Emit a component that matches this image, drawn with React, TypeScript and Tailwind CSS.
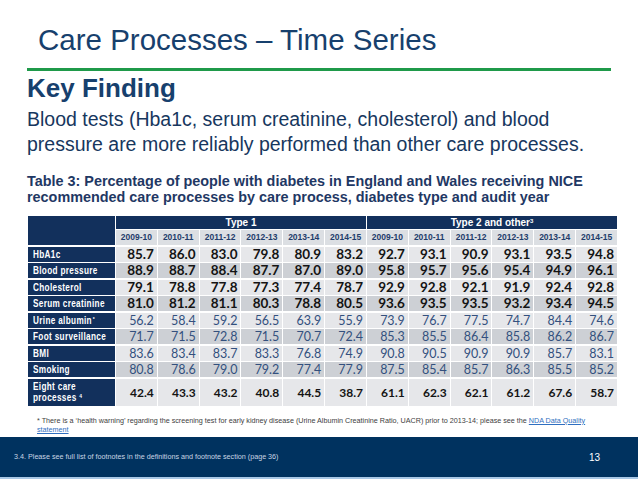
const rows = [
  { label: "HbA1c", kind: "bold", t1: ["85.7", "86.0", "83.0", "79.8", "80.9", "83.2"], t2: ["92.7", "93.1", "90.9", "93.1", "93.5", "94.8"] },
  { label: "Blood pressure", kind: "bold", t1: ["88.9", "88.7", "88.4", "87.7", "87.0", "89.0"], t2: ["95.8", "95.7", "95.6", "95.4", "94.9", "96.1"] },
  { label: "Cholesterol", kind: "bold", t1: ["79.1", "78.8", "77.8", "77.3", "77.4", "78.7"], t2: ["92.9", "92.8", "92.1", "91.9", "92.4", "92.8"] },
  { label: "Serum creatinine", kind: "bold", t1: ["81.0", "81.2", "81.1", "80.3", "78.8", "80.5"], t2: ["93.6", "93.5", "93.5", "93.2", "93.4", "94.5"] },
  { label: "Urine albumin", star: true, kind: "light", t1: ["56.2", "58.4", "59.2", "56.5", "63.9", "55.9"], t2: ["73.9", "76.7", "77.5", "74.7", "84.4", "74.6"] },
  { label: "Foot surveillance", kind: "light", t1: ["71.7", "71.5", "72.8", "71.5", "70.7", "72.4"], t2: ["85.3", "85.5", "86.4", "85.8", "86.2", "86.7"] },
  { label: "BMI", kind: "light", t1: ["83.6", "83.4", "83.7", "83.3", "76.8", "74.9"], t2: ["90.8", "90.5", "90.9", "90.9", "85.7", "83.1"] },
  { label: "Smoking", kind: "light", t1: ["80.8", "78.6", "79.0", "79.2", "77.4", "77.9"], t2: ["87.5", "85.4", "85.7", "86.3", "85.5", "85.2"] },
];

const eight = {
  t1: ["42.4", "43.3", "43.2", "40.8", "44.5", "38.7"],
  t2: ["61.1", "62.3", "62.1", "61.2", "67.6", "58.7"],
};

const years = ["2009-10", "2010-11", "2011-12", "2012-13", "2013-14", "2014-15"];

const arial = "font-['Liberation_Sans',Arial,sans-serif]";
const nums = "font-['Lato','Liberation_Sans',sans-serif]";

function DataTable() {
  return (
    <div className={`grid grid-cols-[87px_repeat(12,minmax(0,1fr))] gap-x-px gap-y-[1.5px] ${arial}`}>
      {/* header */}
      <div className="row-span-2 bg-[#12305c]" />
      <div className="col-span-6 h-[13px] bg-[#12305c] text-white text-[10px] font-bold leading-[13px] text-center">
        Type 1
      </div>
      <div className="col-span-6 h-[13px] bg-[#12305c] text-white text-[10px] font-bold leading-[13px] text-center">
        Type 2 and other<span className="relative -top-[3px] text-[6px]">3</span>
      </div>
      {[...years, ...years].map((y, i) => (
        <div
          key={i}
          className="h-[15px] bg-[#dcdfe3] text-[#1f3d6b] text-[8.5px] font-bold leading-[15px] text-center"
        >
          {y}
        </div>
      ))}

      {/* rows */}
      {rows.map((r, ri) => {
        const bg = ri % 2 === 0 ? "bg-[#e6e7ea]" : "bg-[#cdd0d5]";
        const txt =
          r.kind === "bold"
            ? "text-[13.5px] font-bold text-[#141414]"
            : "text-[12.5px] text-[#33507e]";
        return [
          <div
            key={r.label}
            className="h-[15px] bg-[#12305c] text-white text-[10px] font-bold leading-[15px] pl-[5px] whitespace-nowrap"
          >
            <span className="inline-block origin-left scale-x-[0.82] tracking-[0.4px]">
              {r.label}
              {r.star && <span className="relative -top-[3px] text-[6px] ml-[1px]">*</span>}
            </span>
          </div>,
          ...[...r.t1, ...r.t2].map((v, i) => (
            <div
              key={r.label + i}
              className={`h-[15px] ${bg} ${nums} ${txt} leading-[15px] text-right pr-[3px]`}
            >
              {v}
            </div>
          )),
        ];
      })}

      <div className="h-[27px] bg-[#12305c] text-white text-[10px] font-bold leading-[11px] pl-[5px] pt-[2px]">
        <span className="inline-block origin-left scale-x-[0.82] tracking-[0.4px] whitespace-nowrap">
          Eight care
          <br />
          processes <span className="relative -top-[3px] text-[6px]">4</span>
        </span>
      </div>
      {[...eight.t1, ...eight.t2].map((v, i) => (
        <div
          key={"e" + i}
          className={`h-[27px] bg-[#e6e7ea] ${nums} text-[12px] font-bold text-[#141414] leading-[27px] text-right pr-[3px]`}
        >
          {v}
        </div>
      ))}
    </div>
  );
}

export default function App() {
  return (
    <div className={`w-[638px] h-[479px] bg-white flex flex-col overflow-hidden ${arial}`}>
      <div className="pl-[38px] pt-[25px] text-[29.5px] leading-none text-[#17406d]">
        Care Processes – Time Series
      </div>
      <div className="mx-[27px] mt-[13px] h-[3px] bg-[#1f9a4a]" />

      <div className="px-[27px]">
        <h1 className="mt-[4px] text-[26px] leading-none font-bold text-[#17406d]">Key Finding</h1>
        <p className="mt-[6px] text-[19.5px] leading-[25px] text-[#17375e]">
          Blood tests (Hba1c, serum creatinine, cholesterol) and blood
          <br />
          pressure are more reliably performed than other care processes.
        </p>
        <p className="mt-[16px] text-[14.4px] leading-[16px] font-bold text-[#1f3864] whitespace-nowrap">
          Table 3: Percentage of people with diabetes in England and Wales receiving NICE
          <br />
          recommended care processes by care process, diabetes type and audit year
        </p>
      </div>

      <div className="ml-[28px] mr-[21px] mt-[11px]">
        <DataTable />
      </div>

      <p className="pl-[37px] mt-[10px] text-[7.2px] leading-[9px] text-[#404040] whitespace-nowrap">
        * There is a ‘health warning’ regarding the screening test for early kidney disease (Urine Albumin
        Creatinine Ratio, UACR) prior to 2013-14; please see the{" "}
        <span className="text-[#2f6fc0] underline">NDA Data Quality</span>
        <br />
        <span className="text-[#2f6fc0] underline">statement</span>
      </p>

      <div className="mt-auto h-[42px] bg-[#00325f] border-b-2 border-[#a9c8e6] flex items-center justify-between pl-[14px] pr-[38px]">
        <span className="text-[7.2px] text-[#c9d5e4]">
          3.4. Please see full list of footnotes in the definitions and footnote section (page 36)
        </span>
        <span className="text-[10px] text-white">13</span>
      </div>
    </div>
  );
}
